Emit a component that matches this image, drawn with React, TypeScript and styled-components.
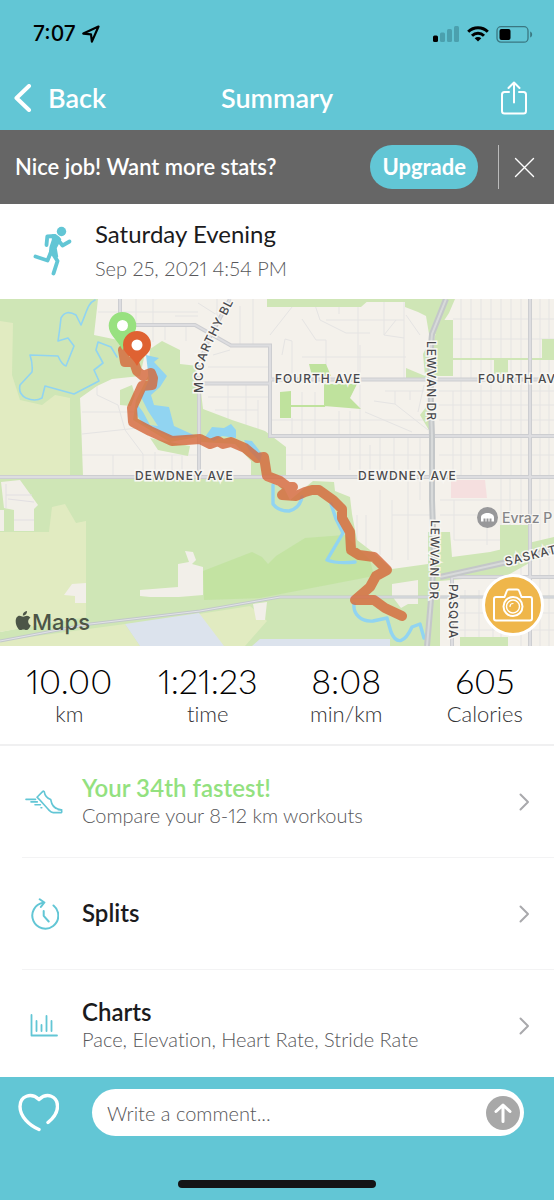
import React from "react";
import styled, { createGlobalStyle } from "styled-components";

const teal = "#62c6d5";

const GlobalStyle = createGlobalStyle`
  * { box-sizing: border-box; }
  body {
    margin: 0;
    background: #fff;
    font-family: Lato, "Liberation Sans", sans-serif;
    font-variant-ligatures: none;
    font-variant-numeric: proportional-nums;
    color: #1b1b1d;
  }
  h1, h2, p, dl, dd, dt { margin: 0; }
  button { border: 0; padding: 0; background: none; font: inherit; color: inherit; cursor: pointer; }
  svg { display: block; flex: none; }
`;

const Page = styled.div`
  min-height: 100vh;
  display: flex;
  flex-direction: column;
`;

const Header = styled.header`
  background: ${teal};
`;

const StatusBar = styled.div`
  height: 66px;
  padding: 2px 21px 0 33px;
  display: flex;
  align-items: center;
  justify-content: space-between;
  color: #000;
  font: 500 21px/24px Inter, sans-serif;
`;

const StatusGroup = styled.div<{ $gap: number }>`
  display: flex;
  align-items: center;
  gap: ${(p) => p.$gap}px;
`;

const NavBar = styled.nav`
  height: 64px;
  padding: 0 26px 0 14px;
  display: grid;
  grid-template-columns: 1fr auto 1fr;
  align-items: center;
  color: #fff;
`;

const BackButton = styled.button`
  display: flex;
  align-items: center;
  gap: 16px;
  font-size: 27px;
  line-height: 32px;
  font-weight: 600;
`;

const PageTitle = styled.h1`
  padding-left: 12px;
  font-size: 27px;
  line-height: 32px;
  font-weight: 600;
`;

const ShareButton = styled.button`
  justify-self: end;
`;

const Banner = styled.aside`
  height: 74px;
  padding: 0 19px 0 15px;
  display: flex;
  align-items: center;
  background: #666;
  color: #fff;
  font-size: 22px;
  line-height: 28px;
  font-weight: 600;
`;

const BannerText = styled.p`
  flex: 1;
`;

const UpgradeButton = styled.button`
  height: 44px;
  padding: 0 12px;
  border-radius: 22px;
  background: ${teal};
  font-weight: 700;
`;

const BannerRule = styled.span`
  width: 1px;
  height: 44px;
  margin: 0 15px 0 20px;
  background: #bbb;
`;

const Workout = styled.section`
  height: 95px;
  padding: 0 33px 2px;
  display: flex;
  align-items: center;
  gap: 22px;
`;

const WorkoutName = styled.h2`
  font-size: 24px;
  line-height: 32px;
  font-weight: 400;
`;

const WorkoutDate = styled.p`
  margin-top: 2px;
  font-size: 20px;
  line-height: 32px;
  font-weight: 300;
  color: #57575a;
`;

const MapPanel = styled.section`
  position: relative;
  height: 347px;
  overflow: hidden;
`;

const MapDrawing = styled.svg`
  width: 100%;
  height: 100%;
`;

const PhotoButton = styled.button`
  position: absolute;
  right: 10px;
  bottom: 10px;
  width: 62px;
  height: 62px;
  display: grid;
  place-items: center;
  border: 3px solid #fff;
  border-radius: 50%;
  background: #efb64a;
`;

const Stats = styled.dl`
  height: 100px;
  padding-top: 14px;
  display: grid;
  grid-template-columns: repeat(4, 1fr);
  border-bottom: 2px solid #f0f0f1;
  text-align: center;
`;

const Stat = styled.div`
  display: flex;
  flex-direction: column-reverse;
  justify-content: flex-end;
`;

const StatValue = styled.dd`
  font-size: 34px;
  line-height: 42px;
  font-weight: 300;
  color: #000;
`;

const StatLabel = styled.dt`
  font-size: 22px;
  line-height: 24px;
  font-weight: 300;
  color: #333336;
`;

const Links = styled.main`
  flex: 1;
`;

const RowLink = styled.a`
  height: 112px;
  margin-left: 22px;
  padding-right: 24px;
  display: flex;
  align-items: center;
  border-bottom: 1px solid #f3f3f4;
  color: inherit;
  text-decoration: none;

  &:last-child {
    height: 107px;
    border-bottom: 0;
    padding-top: 4px;
  }
`;

const RowIcon = styled.span`
  width: 44px;
  margin-right: 16px;
  display: grid;
  place-items: center;
`;

const RowText = styled.span`
  flex: 1;
  padding-bottom: 2px;
  display: flex;
  flex-direction: column;
`;

const RowTitle = styled.span<{ $accent?: boolean }>`
  font-size: 24px;
  line-height: 28px;
  font-weight: 600;
  color: ${(p) => (p.$accent ? "#93e17f" : "#1b1b1d")};
`;

const RowNote = styled.span`
  font-size: 20px;
  line-height: 26px;
  font-weight: 300;
  color: #57575a;
`;

const Footer = styled.footer`
  min-height: 123px;
  padding: 12px 0;
  display: flex;
  flex-direction: column;
  justify-content: space-between;
  background: ${teal};
`;

const CommentForm = styled.form`
  padding: 0 30px 0 18px;
  display: flex;
  align-items: center;
  gap: 33px;
`;

const CommentBox = styled.div`
  flex: 1;
  height: 47px;
  padding: 0 4px 0 15px;
  display: flex;
  align-items: center;
  border-radius: 24px;
  background: #fff;
`;

const CommentInput = styled.input`
  flex: 1;
  min-width: 0;
  border: 0;
  padding: 0;
  outline: 0;
  background: none;
  font: 300 20px/28px Lato, "Liberation Sans", sans-serif;
  color: #1b1b1d;

  &::placeholder { color: #57575a; opacity: 1; }
`;

const SendButton = styled.button`
  width: 34px;
  height: 34px;
  display: grid;
  place-items: center;
  border-radius: 50%;
  background: #a8a8a8;
`;

const HomeIndicator = styled.div`
  width: 198px;
  height: 8px;
  align-self: center;
  border-radius: 4px;
  background: #141416;
`;

const Chevron = () => (
  <svg width="11" height="18" viewBox="0 0 11 18" fill="none" stroke="#a9a9ac" strokeWidth="2" strokeLinecap="round" strokeLinejoin="round">
    <path d="M1.500 1.500 9 9l-7.500 7.500" />
  </svg>
);

const ShoeIcon = () => (
  <svg width="38" height="24" viewBox="0 0 38 24" fill="none" stroke={teal} strokeWidth="1.600" strokeLinecap="round" strokeLinejoin="round">
    <path d="M12 7.200 17.800 1.400c.6-.5 1.300-.3 1.500.4.400 3 2.500 6.200 6.400 7.700.8 4.500 3.200 8.500 7.300 9.600l3.200.8c.7.200.7.8.6 2l-.4.700h-8.200c-1.800 0-2.700-.8-4-2.200C20 16 16.500 11.500 12 7.200Z" />
    <path d="M1 9.400h9.500M6 11.900h6.300M10 14.800h5.400M16 17.800h.8" />
    <path d="M33.200 19.800h3.500" />
  </svg>
);

const SplitsIcon = () => (
  <svg width="30" height="32" viewBox="0 0 30 32" fill="none" stroke={teal} strokeWidth="2" strokeLinecap="round" strokeLinejoin="round">
    <path d="M24.500 7.500A13 13 0 1 1 14 4.800" />
    <path d="m10.700 1.200 4.700 3.300-3.500 4.400M14.700 13v4.800l5 5.700" />
  </svg>
);

const ChartsIcon = () => (
  <svg width="28" height="23" viewBox="0 0 28 23" fill="none" stroke={teal} strokeWidth="1.800" strokeLinecap="round" strokeLinejoin="round">
    <path d="M1.500 1v20.500H27M6.500 7v10M11.500 11v6M16.500 2v15M21.500 7v10" />
  </svg>
);

const rows = [
  { title: "Your 34th fastest!", note: "Compare your 8-12 km workouts", Icon: ShoeIcon, accent: true },
  { title: "Splits", note: "", Icon: SplitsIcon, accent: false },
  { title: "Charts", note: "Pace, Elevation, Heart Rate, Stride Rate", Icon: ChartsIcon, accent: false },
];

const stats = [
  { value: "10.00", label: "km" },
  { value: "1:21:23", label: "time" },
  { value: "8:08", label: "min/km" },
  { value: "605", label: "Calories" },
];

const roads =
  "M0 477H554M200 383.500H270V379.500H554M120 299V325H195L231 345.500H270V436H554M199 476V370Q200 358 210 337L230 299M530 299V646M452 577H554M452 577V646";
const highway = "M446 299 432 334Q429 360 432 436V500L434 560Q432 590 427 646M440 577 503 563 554 549";
const route =
  "M123 350 125 362 134 362 137 371 143 376 151 373 153 378 152 385 142 386 132 408 133 422 150 431 172 441 200 439 210 444 218 441 223 444 231 442 245 448 257 458 264 457 267 476 280 481 288 487 293 487 286 492 282 495 296 496 305 492 312 490 319 490 333 500 342 509 342 518 350 532 351 550 359 555 374 557 387 570 376 576 370 587 355 600 374 600 385 608 402 616";

const WorkoutMap = () => (
  <MapDrawing viewBox="0 299 554 347" preserveAspectRatio="xMidYMid slice" role="img" aria-label="Route map">
    <rect y="299" width="554" height="347" fill="#f4f1eb" />
    {/* minor streets */}
    <g fill="none" stroke="#e5e4e3" strokeWidth="1">
      <path d="M98 312H198M136 299V325M153 299V342M165 325V340M175 316H198M186 325V341M198 303 220 317M82 412H135M82 434 138 428M82 455H198M97 385V395L118 405 125 430 143 454V476M113 455V476M155 452V476M172 455V476M182 456V476" />
      <path d="M217 299V330M240 306V345M253 299V345M208 367H270M213 355 230 350M228 383V436M246 383V436M258 400V436M208 397H270M215 410H258M270 335 292 307M282 355 285 339 292 341V378M302 319 316 340H326V378M315 305 320 320 346 333H370M326 320H404M339 299V314M358 299V378M302 357H406M404 302V378M384 302V335L396 320M406 315 420 335M384 335 404 338M292 418V436M302 392V470M315 392V470M339 411V470M350 411V470M360 345V470M270 420H430M286 455H430M370 445V476M380 436V476M394 436V476M408 436V476M420 436V476M365 412 412 432M374 401 395 404 428 430M385 391H424M395 391V404M410 391V400M424 385 418 412" />
      <path d="M461 299V476M471 299V378M481 299V476M491 299V378M501 299V646M511 299V476M521 299V646M540 299V646M549 299V646M453 319H554M453 339H554M439 391H554M439 405H554M439 420H554M439 455H554M453 391V476M471 390V470M491 380V470M392 515H430M380 490V555M392 500V560M408 477V560M420 477V500M440 500H554M440 515H480M454 500V540H530M487 515V545M510 477V525M452 613H554M452 630H554M465 590V646M479 590V646M493 590V646M400 585V612M410 585V612M395 597H430M357 515V547M366 515V547" />
    </g>
    <g fill="#cfe6b6">
      <path d="M0 299H98L94 335 118 340 146 349 140 376 112 379 97 386 80 398 81 420 83 476H0Z" />
      <path d="M150 349 162 341 180 350V364L198 366V365L203 409 232 420 265 431 286 447V478H251V461L235 444 200 442 198 437 170 442 133 420 136 400 148 376Z" />
      <path d="M120 390 132 385 135 395 131 406 120 405ZM150 438 190 446 188 456 158 450ZM267 299H370L361 307H267Z" />
      <path d="M364 299H455L449 313 434 336V378H406V368L425 376 423 354 430 340 426 316 418 312 405 307V302H364ZM439 320H453V376H434V340ZM542 339H554V360H542ZM494 359H508V374H494ZM420 415 430 402V432ZM453 358H542V360H453Z" />
      <path d="M0 478H86V532H0ZM86 478H260L284 488 290 500 313 481 334 482 335 491 350 497 352 514 357 540 374 553 392 569 428 564V532H450L452 557 490 552 554 537V549L508 575 440 581V646H0V632L86 615ZM500 525H530V543L500 552ZM460 637H508V646H460Z" />
    </g>
    <g fill="#bfe29d">
      <path d="M309 364H326L331 376H312ZM324 384H357L350 398 361 409 324 406ZM280 392 291 391V418H280ZM291 405H325V407H291Z" />
      <path d="M203 571 252 552 262 557 268 564 276 556 305 538 345 535 370 560 374 576 260 598 204 600Z" opacity=".8" />
    </g>
    <g fill="#e1ebc1">
      <path d="M0 321 13 323 12 375 20 400 42 405 55 395 70 398V476H0ZM0 532H49L52 507 65 504 76 523 86 521V617L0 632Z" />
      <path d="M0 641 125 624 140 646H0ZM199 614 250 606 267 621 245 646H222Z" />
    </g>
    <path d="M125 624 199 613 224 646H140ZM260 639H390V646H252Z" fill="#dce3ed" />
    <path d="M1 482 20 480 38 505 34 509V531H14V510L4 508ZM0 510H4V531H0ZM64 595 72 584 86 583V603H75V596ZM185 551 193 552 196 560 192 564 203 567V595L179 597H150L140 596V590L178 587V564L189 562ZM253 604 267 602 265 620H256ZM392 584 418 580V604H408L401 608 392 596Z" fill="#f2efe9" />
    <path d="M6 484V508M6 495H32M8 499 34 502M14 520H34" fill="none" stroke="#e2dfe2" />
    <path d="M451 480H485L487 498H451Z" fill="#f5dfdf" />
    {/* water */}
    <g fill="#91d4f1">
      <path d="M146 355 159 358 154 362 167 376 160 387 151 395 154 405 169 407 174 426 196 436 172 438 143 424 136 414 137 404 143 412 150 425 158 426 148 411 144 403 141 397 149 380Z" />
      <path d="M205 437 212 427 224 428 231 424 236 430 236 438 222 436 214 441ZM244 440 252 441 262 454 260 462 249 450Z" />
    </g>
    <g fill="none" stroke="#91d4f1" strokeLinejoin="round" strokeLinecap="round">
      <path strokeWidth="1.600" d="M95 300C88 303 87 311 81 325L76 315Q66 309 61 318 60 328 58 341L68 338 74 346 66 366Q62 365 58 356L30 355Q33 364 32 372L20 385Q18 394 26 398 35 402 42 398L45 386 74 394 99 381 94 370 103 363 96 350 98 342 111 347 117 357" />
      <path strokeWidth="3.400" d="M273 485V504Q278 511 289 511 300 508 302 497M331 504 336 519 343 533 327 560Q337 564 355 562M354 604C353 613 360 622 373 621L387 618 391 632C397 646 405 642 412 627L420 624 424 638" />
    </g>
    <g fill="none">
      <path d="M0 641 90 624 200 611 280 597H554" stroke="#c2c8ca" strokeWidth="3" />
      <path d="M0 641 90 624 200 611 280 597H554" stroke="#e2e2e8" />
      <path d={roads} stroke="#cdced1" strokeWidth="4" />
      <path d={roads} stroke="#dddde0" strokeWidth="2" />
      <path d={highway} stroke="#c4c7c9" strokeWidth="6" />
      <path d={highway} stroke="#d8dada" strokeWidth="2" />
    </g>
    <path d={route} fill="none" stroke="#d4663a" strokeOpacity=".8" strokeWidth="10" strokeLinecap="round" strokeLinejoin="round" />
    <path d="M122.500 312a13.800 13.800 0 0 0-13.800 13.800c0 9 9 14 13.800 24.200 5-10 13.800-15 13.800-24.200a13.800 13.800 0 0 0-13.800-13.800Z" fill="#98e180" />
    <circle cx="122.500" cy="325.500" r="5.500" fill="#fff" />
    <path d="M137 331a14 14 0 0 0-14 14c0 9 9 11 14 21 5-10 14-12 14-21a14 14 0 0 0-14-14Z" fill="#df6232" />
    <circle cx="137" cy="345" r="5.500" fill="#fff" />
    {/* labels */}
    <defs>
      <path id="mccarthy" d="M203 393V373Q203 361 215 338L240 289" />
    </defs>
    <g fill="#49494c" stroke="#f8f7f3" strokeWidth="3" paintOrder="stroke" fontFamily="Inter, sans-serif" fontSize="12" fontWeight="500" letterSpacing="1">
      <text><textPath href="#mccarthy">MCCARTHY BL</textPath></text>
      <text x="275" y="383">FOURTH AVE</text>
      <text x="478" y="383">FOURTH AV</text>
      <text x="135" y="480">DEWDNEY AVE</text>
      <text x="358" y="480">DEWDNEY AVE</text>
      <text transform="translate(427 341) rotate(90)">LEWVAN DR</text>
      <text transform="translate(431 520) rotate(91)">LEWVAN DR</text>
      <text transform="translate(449 584) rotate(90)">PASQUA</text>
      <text transform="translate(506 566) rotate(-14)">SASKAT</text>
    </g>
    <circle cx="487.500" cy="517.500" r="10.500" fill="#98989a" />
    <path d="M481 521.500v-4c0-6 13-6 13 0v4h-2.500v-3h-2v3h-1v-3h-2v3h-1v-3h-2v3Z" fill="#fff" />
    <text x="502" y="523" fill="#858588" stroke="#f8f7f3" strokeWidth="2" paintOrder="stroke" fontFamily="Inter, sans-serif" fontSize="14" fontWeight="500">Evraz P</text>
    <g fill="#4c5547">
      <path d="M27 615.800c-1.600 0-2.600.9-3.800.9-1.300 0-2.300-.9-3.700-.9-2.200 0-3.800 2.300-3.800 5.400 0 4.400 2.800 8.900 4.900 8.900 1.100 0 1.600-.7 2.900-.7s1.700.7 2.900.7c1.900 0 3.500-2.700 4.300-4.700-3.200-1.300-3.400-5.900-.3-7.600-.9-1.300-2.100-2-3.400-2ZM22.800 615.600c2.600.1 4.400-2.100 4.200-4.500-2.500.2-4.400 2.200-4.200 4.500Z" />
      <text x="32" y="630" fontFamily="Inter, sans-serif" fontSize="22" fontWeight="500">Maps</text>
    </g>
  </MapDrawing>
);

export default function App() {
  return (
    <Page>
      <GlobalStyle />
      <Header>
        <StatusBar>
          <StatusGroup $gap={6}>
            <span>7:07</span>
            <svg width="18" height="18" viewBox="0 0 18 18" fill="none" stroke="#000" strokeWidth="2.200" strokeLinejoin="round">
              <path d="M16.500 1.500 1.300 8.600l7.700.8.900 7.200Z" />
            </svg>
          </StatusGroup>
          <StatusGroup $gap={7}>
            <svg width="27" height="16" viewBox="0 0 27 16" fill="#4ba0ae">
              <rect y="9.500" width="5" height="6.500" rx="1.500" fill="#000" />
              <rect x="7" y="6.500" width="5" height="9.500" rx="1.500" />
              <rect x="14" y="3" width="5" height="13" rx="1.500" />
              <rect x="21" width="5" height="16" rx="1.500" />
            </svg>
            <svg width="22" height="16" viewBox="0 0 22 16" fill="none" stroke="#000" strokeWidth="3">
              <path d="M1.200 5.800a14 14 0 0 1 19.600 0M5 9.800a8.600 8.600 0 0 1 12 0" />
              <path d="M11 15.500 7.700 12.300a4.600 4.600 0 0 1 6.600 0Z" fill="#000" stroke="none" />
            </svg>
            <svg width="37" height="17" viewBox="0 0 37 17">
              <rect x="1" y=".7" width="31" height="15.500" rx="4" fill="none" stroke="#3a7781" strokeWidth="1.300" />
              <rect x="3.500" y="3" width="11" height="11" rx="2" />
              <path d="M34.200 5.500c2.600 1 2.600 5 0 6Z" fill="#3a7781" />
            </svg>
          </StatusGroup>
        </StatusBar>
        <NavBar>
          <BackButton type="button">
            <svg width="18" height="28" viewBox="0 0 18 28" fill="none" stroke="#fff" strokeWidth="4" strokeLinecap="round" strokeLinejoin="round">
              <path d="M15 2 2.500 14 15 26" />
            </svg>
            Back
          </BackButton>
          <PageTitle>Summary</PageTitle>
          <ShareButton type="button" aria-label="Share">
            <svg width="28" height="34" viewBox="0 0 28 34" fill="none" stroke="#fff" strokeWidth="2" strokeLinecap="round" strokeLinejoin="round">
              <path d="M9 11H4.500Q2 11 2 13.500V30q0 2.500 2.500 2.500h19q2.500 0 2.500-2.500V13.500Q26 11 23.500 11H19M14 21.500V1.500M8.500 7 14 1.500 19.500 7" />
            </svg>
          </ShareButton>
        </NavBar>
      </Header>

      <Banner>
        <BannerText>Nice job! Want more stats?</BannerText>
        <UpgradeButton type="button">Upgrade</UpgradeButton>
        <BannerRule />
        <button type="button" aria-label="Dismiss">
          <svg width="21" height="21" viewBox="0 0 21 21" fill="none" stroke="#fff" strokeWidth="1.400" strokeLinecap="round">
            <path d="m1.500 1.500 18 18M19.500 1.500l-18 18" />
          </svg>
        </button>
      </Banner>

      <Workout>
        <svg width="40" height="50" viewBox="0 0 40 50" fill="none" stroke={teal} strokeLinecap="round" strokeLinejoin="round">
          <circle cx="28.500" cy="5.500" r="4.700" fill={teal} stroke="none" />
          <path d="m13.500 19 .8-8.500L22 10l7.500 9.500 7-4" strokeWidth="3.800" />
          <path d="M20 9.500Q24 9 27 13.500L22.500 22 24 30.500 17 27.500Q17 21 20 14Z" fill={teal} strokeWidth="2.400" />
          <path d="M18 26 14.500 34.500 2.500 30.500M20 28 24.500 35 20.500 47.500" strokeWidth="3.900" />
        </svg>
        <div>
          <WorkoutName>Saturday Evening</WorkoutName>
          <WorkoutDate>Sep 25, 2021 4:54 PM</WorkoutDate>
        </div>
      </Workout>

      <MapPanel>
        <WorkoutMap />
        <PhotoButton type="button" aria-label="Add photo">
          <svg width="42" height="34" viewBox="0 0 42 34" fill="none" stroke="#fff" strokeWidth="2" strokeLinecap="round" strokeLinejoin="round">
            <path d="M4 9h8.500l2.300-6q.5-1.500 2-1.500h8.400q1.500 0 2 1.500l2.300 6H38q2 0 2 2v19.500q0 2-2 2H4q-2 0-2-2V11q0-2 2-2Z" />
            <circle cx="21" cy="18.500" r="9.500" />
            <circle cx="21" cy="18.500" r="6.500" strokeWidth="1.400" />
            <path d="M18 18.500q0-3 3-3" strokeWidth="1.200" />
          </svg>
        </PhotoButton>
      </MapPanel>

      <Stats>
        {stats.map((s) => (
          <Stat key={s.label}>
            <StatLabel>{s.label}</StatLabel>
            <StatValue>{s.value}</StatValue>
          </Stat>
        ))}
      </Stats>

      <Links>
        {rows.map(({ title, note, Icon, accent }) => (
          <RowLink key={title} href="#">
            <RowIcon><Icon /></RowIcon>
            <RowText>
              <RowTitle $accent={accent}>{title}</RowTitle>
              {note && <RowNote>{note}</RowNote>}
            </RowText>
            <Chevron />
          </RowLink>
        ))}
      </Links>

      <Footer>
        <CommentForm>
          <button type="button" aria-label="Like">
            <svg width="41" height="39" viewBox="0 0 41 39" fill="none" stroke="#fff" strokeWidth="3.400" strokeLinecap="round" strokeLinejoin="round">
              <path d="M21 36.500C11 32 2 23.500 2 13.500 2 3 13-1 21 6.500 29-1 39.500 3 39.500 13.500c0 6-4 11.500-9.500 16" />
            </svg>
          </button>
          <CommentBox>
            <CommentInput type="text" aria-label="Comment" placeholder="Write a comment..." />
            <SendButton type="button" aria-label="Send">
              <svg width="18" height="20" viewBox="0 0 18 20" fill="none" stroke="#fff" strokeWidth="3" strokeLinecap="round" strokeLinejoin="round">
                <path d="M9 18.500V2M2 8.500 9 2l7 6.500" />
              </svg>
            </SendButton>
          </CommentBox>
        </CommentForm>
        <HomeIndicator />
      </Footer>
    </Page>
  );
}
